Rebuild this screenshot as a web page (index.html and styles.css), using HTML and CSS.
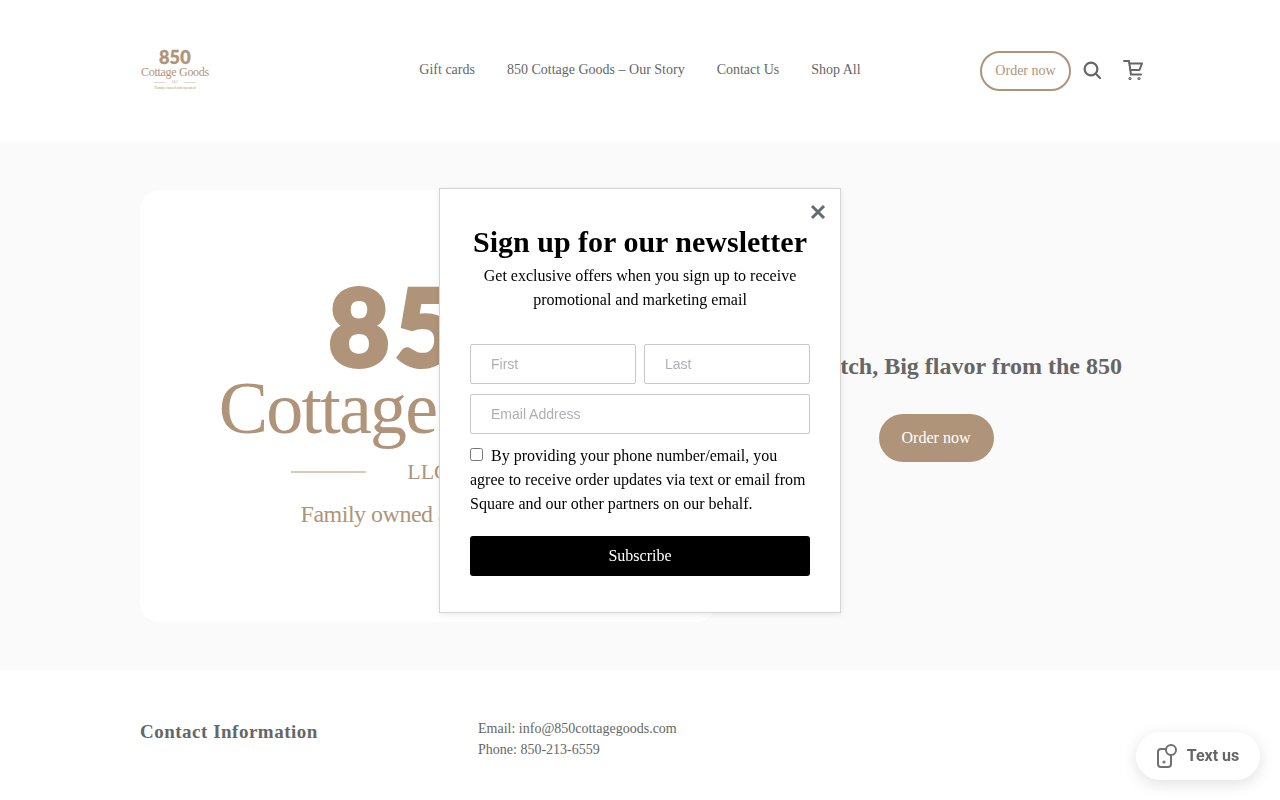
FILE: index.html
```html
<!DOCTYPE html>
<html lang="en">
<head>
    <meta charset="UTF-8">
    <meta name="viewport" content="width=device-width, initial-scale=1.0">
    <title>850 Cottage Goods</title>
    <link rel="stylesheet" href="styles.css">
</head>
<body>
    <header class="site-header">
        <a class="logo" href="#">
            <span class="logo-num">850</span>
            <span class="logo-name">Cottage Goods</span>
            <span class="logo-llc"><i class="logo-rule"></i>LLC<i class="logo-rule"></i></span>
            <span class="logo-tag">Family owned and operated</span>
        </a>
        <nav class="main-nav">
            <a href="#">Gift cards</a>
            <a href="#">850 Cottage Goods – Our Story</a>
            <a href="#">Contact Us</a>
            <a href="#">Shop All</a>
        </nav>
        <div class="header-actions">
            <a class="order-outline" href="#">Order now</a>
            <svg class="icon-search" width="20" height="20" viewBox="0 0 20 20" fill="none" stroke="#666" stroke-width="2.2" stroke-linecap="round">
                <circle cx="9" cy="9" r="6.4"/>
                <path d="M13.8 13.8 18 18"/>
            </svg>
            <svg class="icon-cart" width="20" height="22" viewBox="0 0 20 22" fill="none" stroke="#666" stroke-width="2" stroke-linecap="round" stroke-linejoin="round">
                <path d="M1 2h5l2 13.5h10"/>
                <path d="M6.5 4.5H19l-2.5 6.5H7.5"/>
                <circle cx="7" cy="19.5" r=".6"/>
                <circle cx="16" cy="19.5" r=".6"/>
            </svg>
        </div>
    </header>

    <main class="hero">
        <div class="hero-card">
            <div class="brand">
                <div class="brand-num">850</div>
                <div class="brand-name">Cottage Goods</div>
                <div class="brand-llc"><span class="rule"></span>LLC<span class="rule"></span></div>
                <div class="brand-tag">Family owned and operated</div>
            </div>
        </div>
        <div class="hero-copy">
            <h2>Small batch, Big flavor from the 850</h2>
            <a class="order-solid" href="#">Order now</a>
        </div>
    </main>

    <footer class="site-footer">
        <h3>Contact Information</h3>
        <div class="contact-lines">
            <p>Email: info@850cottagegoods.com</p>
            <p>Phone: 850-213-6559</p>
        </div>
    </footer>

    <div class="popup-wrap">
        <div class="popup">
            <svg class="popup-close" width="16" height="16" viewBox="0 0 16 16" stroke="#666b70" stroke-width="3">
                <path d="M2 2 14 14M14 2 2 14"/>
            </svg>
            <h1>Sign up for our newsletter</h1>
            <p class="popup-sub">Get exclusive offers when you sign up to receive promotional and marketing email</p>
            <form class="popup-form">
                <div class="name-row">
                    <input type="text" placeholder="First">
                    <input type="text" placeholder="Last">
                </div>
                <input type="email" placeholder="Email Address">
                <label class="consent"><input type="checkbox">By providing your phone number/email, you agree to receive order updates via text or email from Square and our other partners on our behalf.</label>
                <button type="button">Subscribe</button>
            </form>
        </div>
    </div>

    <a class="text-us" href="#">
        <svg width="20" height="24" viewBox="0 0 20 24" fill="none" stroke="#707070" stroke-width="2" stroke-linecap="round">
            <path d="M9 5H4a3 3 0 0 0-3 3v12a3 3 0 0 0 3 3h7a3 3 0 0 0 3-3v-8"/>
            <circle cx="14" cy="6" r="5"/>
            <circle cx="7" cy="18" r=".6"/>
        </svg>
        <span class="text-us-label">Text us</span>
    </a>
</body>
</html>
```

FILE: styles.css
```css
:root {
    --tan: #b09479;
    --gray: #666;
    --serif: "Liberation Serif", "Times New Roman", serif;
}

* {
    margin: 0;
    padding: 0;
    box-sizing: border-box;
}

body {
    font-family: var(--serif);
    background-color: white;
    color: var(--gray);
    overflow: hidden;
    height: 800px;
}

a {
    color: inherit;
    text-decoration: none;
}

.site-header {
    height: 142px;
    padding: 0 140px;
    display: grid;
    grid-template-columns: 1fr auto 1fr;
    align-items: center;
}

.logo {
    width: 70px;
    display: flex;
    flex-direction: column;
    align-items: center;
    color: var(--tan);
}

.logo-num {
    margin-bottom: 2px;
    font-family: Lato, sans-serif;
    font-weight: 900;
    font-size: 18px;
    line-height: 14px;
    letter-spacing: 0.3px;
    -webkit-text-stroke: 0.4px var(--tan);
}

.logo-name {
    font-size: 12px;
    line-height: 13px;
    letter-spacing: -0.3px;
    white-space: nowrap;
}

.logo-llc {
    display: flex;
    align-items: center;
    gap: 6px;
    font-size: 3px;
    line-height: 6px;
}

.logo-rule {
    width: 12px;
    height: 1px;
    background-color: #e3d9cf;
}

.logo-tag {
    font-size: 3.7px;
    line-height: 7px;
    white-space: nowrap;
}

.main-nav {
    display: flex;
    gap: 32px;
    margin-bottom: 2px;
    font-size: 14px;
}

.header-actions {
    margin-right: -3px;
    display: flex;
    align-items: center;
    justify-content: flex-end;
    gap: 11px;
}

.order-outline {
    width: 91px;
    height: 40px;
    display: flex;
    align-items: center;
    justify-content: center;
    border: 2px solid var(--tan);
    border-radius: 20px;
    font-size: 14px;
    color: var(--tan);
}

.icon-search,
.icon-cart {
    margin-bottom: 2px;
}

.icon-cart {
    margin-left: 10px;
}

.hero {
    height: 528px;
    padding: 48px 140px;
    background-color: #fafafa;
    display: grid;
    grid-template-columns: 576px 1fr;
    gap: 16px;
}

.hero-card {
    background-color: white;
    border-radius: 20px;
    display: flex;
    align-items: center;
    justify-content: center;
}

.brand {
    padding-bottom: 3px;
    display: flex;
    flex-direction: column;
    align-items: center;
    color: var(--tan);
}

.brand-num {
    margin-bottom: 6px;
    font-family: Lato, sans-serif;
    font-weight: 900;
    font-size: 106px;
    line-height: 90px;
    letter-spacing: 5px;
    -webkit-text-stroke: 4px var(--tan);
}

.brand-name {
    font-size: 74px;
    line-height: 64px;
    letter-spacing: -1.8px;
    white-space: nowrap;
}

.brand-llc {
    display: flex;
    align-items: center;
    gap: 41px;
    margin-top: 17px;
    font-size: 22px;
    line-height: 30px;
}

.rule {
    width: 75px;
    height: 2px;
    background-color: #d9c9b8;
}

.brand-tag {
    margin-top: 12px;
    font-size: 24px;
    line-height: 30px;
    letter-spacing: -0.5px;
}

.hero-copy {
    display: flex;
    flex-direction: column;
    align-items: center;
    justify-content: center;
    gap: 32px;
}

.hero-copy h2 {
    font-size: 24px;
    line-height: 32px;
}

.order-solid {
    width: 115px;
    height: 48px;
    display: flex;
    align-items: center;
    justify-content: center;
    border-radius: 24px;
    background-color: var(--tan);
    color: white;
    font-size: 16px;
}

.site-footer {
    padding: 48px 140px;
    display: flex;
    gap: 160px;
}

.site-footer h3 {
    width: 178px;
    font-size: 19px;
    line-height: 27px;
    letter-spacing: 0.5px;
    white-space: nowrap;
}

.contact-lines {
    font-size: 14px;
    line-height: 21px;
}

.popup-wrap {
    position: fixed;
    inset: 0;
    display: flex;
    align-items: center;
    justify-content: center;
}

.popup {
    position: relative;
    width: 402px;
    height: 425px;
    padding: 35px 30px 0;
    background-color: white;
    border: 1px solid #d4d4d4;
    box-shadow: 0 2px 6px rgba(0, 0, 0, 0.08);
    color: black;
    text-align: center;
}

.popup-close {
    position: absolute;
    top: 15px;
    right: 14px;
}

.popup h1 {
    font-size: 30px;
    line-height: 36px;
    white-space: nowrap;
}

.popup-sub {
    margin-top: 4px;
    font-size: 16px;
    line-height: 24px;
}

.popup-form {
    margin-top: 32px;
    display: flex;
    flex-direction: column;
    gap: 10px;
    text-align: left;
}

.name-row {
    display: flex;
    gap: 8px;
}

.name-row input {
    min-width: 0;
    flex: 1;
}

.popup-form input[type="text"],
.popup-form input[type="email"] {
    height: 40px;
    padding: 0 20px;
    border: 1px solid #c8c8c8;
    border-radius: 2px;
    font-family: "Liberation Sans", Arial, sans-serif;
    font-size: 14px;
}

.popup-form input::placeholder {
    color: #b0b0b4;
}

.consent {
    font-size: 16px;
    line-height: 24px;
}

.consent input {
    margin: 0 8px 0 0;
    width: 13px;
    height: 13px;
}

.popup-form button {
    margin-top: 10px;
    height: 40px;
    border: none;
    border-radius: 3px;
    background-color: black;
    color: white;
    font-family: var(--serif);
    font-size: 16px;
    cursor: pointer;
}

.text-us {
    position: fixed;
    right: 20px;
    bottom: 20px;
    width: 124px;
    height: 48px;
    display: flex;
    align-items: center;
    justify-content: center;
    gap: 10px;
    border-radius: 24px;
    background-color: white;
    box-shadow: 0 4px 16px rgba(0, 0, 0, 0.12);
    font-family: Roboto, sans-serif;
    font-weight: 700;
    font-size: 16px;
    color: var(--gray);
}

.text-us-label {
    margin-bottom: 2px;
}
```
